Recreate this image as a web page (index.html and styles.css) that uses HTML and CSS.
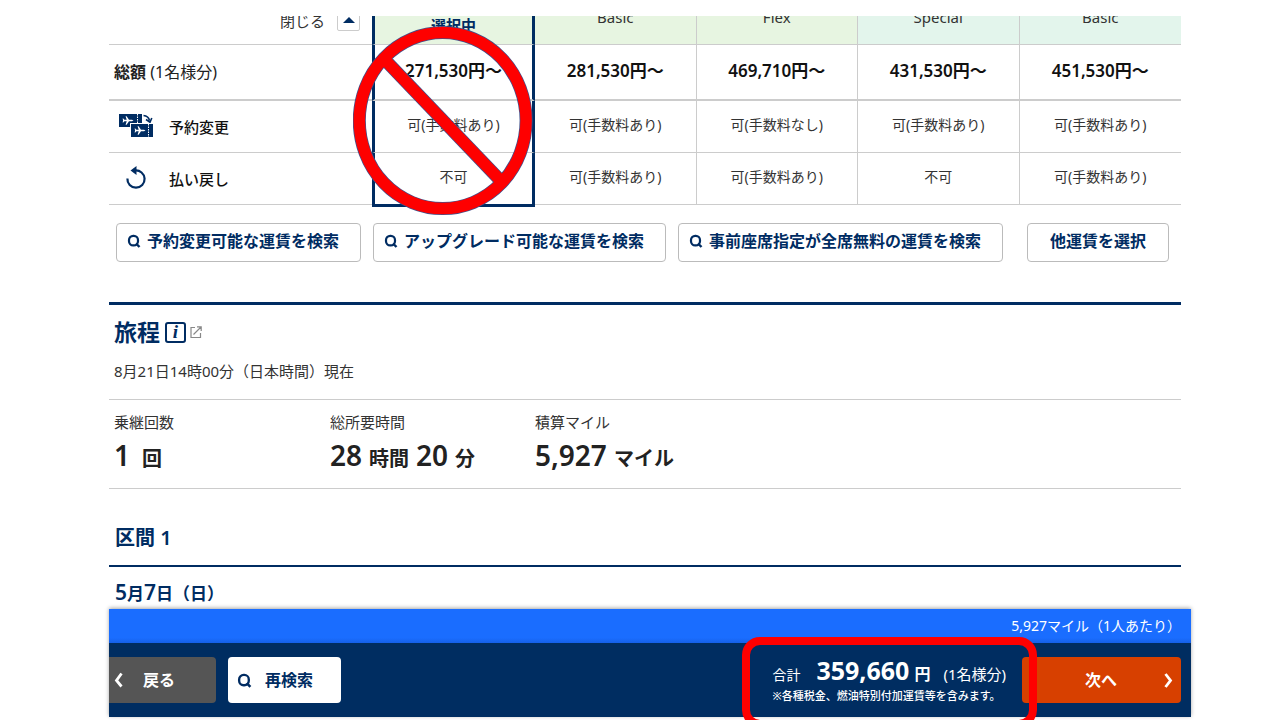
FILE: index.html
```html
<!DOCTYPE html>
<html lang="ja">
<head>
<meta charset="utf-8">
<title>旅程</title>
<link rel="stylesheet" href="styles.css">
</head>
<body>
<svg class="defs" width="0" height="0" aria-hidden="true">
  <symbol id="search" viewBox="0 0 14 14">
    <rect x="2" y="1.800" width="9" height="9.600" rx="4.200" fill="none" stroke="currentColor" stroke-width="2.200"/>
    <path d="M9 9.500l3.500 3.500" stroke="currentColor" stroke-width="2.400"/>
  </symbol>
  <symbol id="plane" viewBox="0 0 12 10">
    <path d="M11.500 5L10 4.200H7L4.600 .8H3.600L4.700 4.200H2.400L1.300 3H.6L1.100 5L.6 7h.7l1.100-1.200h2.300L3.600 9.200h1L7 5.800h3z" fill="#fff"/>
  </symbol>
</svg>
<div class="page">
  <main class="content">
    <table class="fares">
      <colgroup><col class="col-label"><col class="col-selected"><col><col><col><col></colgroup>
      <thead>
        <tr>
          <th>
            <div class="clip clip-toggle">
              <label for="toggle">閉じる</label>
              <button id="toggle" class="toggle" type="button" aria-label="閉じる"><svg width="12" height="6" viewBox="0 0 12 6"><path d="M6 0l6 6H0z" fill="#002c62"/></svg></button>
            </div>
          </th>
          <th class="selected eco">
            <div class="clip clip-selected">選択中</div>
            <svg class="prohibit" width="180" height="190" viewBox="353 26 180 190" aria-hidden="true">
              <g fill="none" stroke="#41508a" stroke-width="13">
                <ellipse cx="442.700" cy="120.600" rx="83.400" ry="88"/><path d="M388 63L498 178"/>
              </g>
              <g fill="none" stroke="#fe0000" stroke-width="11.500">
                <ellipse cx="442.700" cy="120.600" rx="83.400" ry="88"/><path d="M386 61L500 180"/>
              </g>
            </svg>
          </th>
          <th class="eco"><div class="clip">Basic</div></th>
          <th class="eco"><div class="clip">Flex</div></th>
          <th class="premium"><div class="clip">Special</div></th>
          <th class="premium"><div class="clip">Basic</div></th>
        </tr>
      </thead>
      <tbody>
        <tr class="row-total">
          <th><strong>総額</strong> (1名様分)</th>
          <td class="selected">271,530円～</td><td>281,530円～</td><td>469,710円～</td><td>431,530円～</td><td>451,530円～</td>
        </tr>
        <tr class="row-rule">
          <th><div class="rule">
            <svg width="44" height="26" viewBox="0 0 44 26" aria-hidden="true">
              <rect x="5" y="0" width="23" height="13" fill="#002c62"/>
              <use href="#plane" x="8" y="1.500" width="12" height="10"/>
              <path d="M23.500 0v13" stroke="#fff" stroke-dasharray="1.500 1"/>
              <path d="M29.500 1.500q5 .5 6 5M32 5.500l4 2.700 1.800-4.200" fill="none" stroke="#002c62" stroke-width="1.600"/>
              <rect x="16" y="9" width="24" height="15" fill="#fff"/>
              <rect x="17" y="10" width="22" height="13" fill="#002c62"/>
              <use href="#plane" x="20" y="11.500" width="12" height="10"/>
              <path d="M34.500 10v13" stroke="#fff" stroke-dasharray="1.500 1"/>
            </svg>予約変更</div></th>
          <td class="selected">可(手数料あり)</td><td>可(手数料あり)</td><td>可(手数料なし)</td><td>可(手数料あり)</td><td>可(手数料あり)</td>
        </tr>
        <tr class="row-rule">
          <th><div class="rule">
            <svg width="44" height="26" viewBox="0 0 44 26" aria-hidden="true">
              <path d="M21 4.500a8.600 8.600 0 1 1-7.600 8" fill="none" stroke="#002c62" stroke-width="2.200"/>
              <path d="M22.500 0v9L16.500 4.500z" fill="#002c62"/>
            </svg>払い戻し</div></th>
          <td class="selected selected-last">不可</td><td>可(手数料あり)</td><td>可(手数料あり)</td><td>不可</td><td>可(手数料あり)</td>
        </tr>
      </tbody>
    </table>

    <div class="searches">
      <button type="button" class="outline"><svg width="14" height="14"><use href="#search"/></svg>予約変更可能な運賃を検索</button>
      <button type="button" class="outline"><svg width="14" height="14"><use href="#search"/></svg>アップグレード可能な運賃を検索</button>
      <button type="button" class="outline"><svg width="14" height="14"><use href="#search"/></svg>事前座席指定が全席無料の運賃を検索</button>
      <button type="button" class="outline other">他運賃を選択</button>
    </div>

    <section class="itinerary">
      <h2>旅程
        <a href="#" class="info" aria-label="旅程について"><span class="info-box">i</span><svg width="12" height="12" viewBox="0 0 12 12" fill="none" stroke="#888" stroke-width="1.200"><path d="M5 1.500H1v10h9.500V7M3.500 8.500L11 1M7 .8h4.200V5"/></svg></a>
      </h2>
      <p class="asof">8月21日14時00分（日本時間）現在</p>
      <dl class="summary">
        <div><dt>乗継回数</dt><dd class="stops"><b>1</b>回</dd></div>
        <div><dt>総所要時間</dt><dd><b>28</b>時間<b>20</b>分</dd></div>
        <div><dt>積算マイル</dt><dd><b>5,927</b>マイル</dd></div>
      </dl>
      <h3>区間 1</h3>
      <p class="date"><b>5</b>月<b>7</b>日（日）</p>
    </section>
  </main>

  <footer class="bar">
    <div class="miles">5,927マイル（1人あたり）</div>
    <div class="actions">
      <button type="button" class="back"><svg width="9" height="16" viewBox="0 0 9 16"><path d="M7.500 1.500L2.500 8.500l5 6" fill="none" stroke="#fff" stroke-width="2.800"/></svg>戻る</button>
      <button type="button" class="again"><svg width="15" height="15"><use href="#search"/></svg>再検索</button>
      <div class="total">
        <p class="sum"><span class="sum-label">合計</span><b>359,660</b><strong>円</strong><span>(1名様分)</span></p>
        <p class="note">※各種税金、燃油特別付加運賃等を含みます。</p>
        <span class="frame"></span>
      </div>
      <button type="button" class="next"><span>次へ</span><svg width="9" height="16" viewBox="0 0 9 16"><path d="M1.500 2l5 6.500-5 6.500" fill="none" stroke="#fff" stroke-width="2.800"/></svg></button>
    </div>
  </footer>
</div>
</body>
</html>
```
FILE: styles.css
```css
* { box-sizing: border-box; margin: 0; padding: 0; }
body {
  font-family: "Noto Sans", "Noto Sans CJK JP", sans-serif;
  font-size: 15px;
  line-height: 20px;
  color: #333;
  background: #fff;
  overflow: hidden;
}
button { font: inherit; cursor: pointer; }
.defs { position: absolute; }
.page {
  display: flex;
  flex-direction: column;
  height: 100vh;
  padding: 16px 89px 3px 109px;
}
.content { flex: 1; min-height: 0; padding-right: 10px; }

.fares {
  width: 100%;
  table-layout: fixed;
  border-collapse: separate;
  border-spacing: 0;
}
.col-label { width: 263px; }
.col-selected { width: 163px; }
.fares th { font-weight: 400; }
.fares th, .fares td { border-bottom: 1px solid #ccc; text-align: center; }
.fares td:not(:last-child), .fares th.eco, .fares th.premium:not(:last-child) { border-right: 1px solid #ccc; }
.fares tbody th { text-align: left; padding-left: 5px; color: #222; }
.fares .selected.selected {
  position: relative;
  border-left: 3px solid #002c62;
  border-right: 3px solid #002c62;
}
.fares .selected-last::after {
  content: "";
  position: absolute;
  left: -3px;
  right: -3px;
  bottom: -3px;
  height: 3px;
  background: #002c62;
}
.eco { background: #e7f5e1; }
.premium { background: #e3f5ec; }
.clip {
  display: flex;
  align-items: flex-end;
  justify-content: center;
  height: 28px;
  padding-bottom: 17px;
  overflow: hidden;
}
.clip-selected { padding-bottom: 9px; font-weight: 600; color: #002c62; }
.clip-toggle {
  justify-content: flex-end;
  align-items: flex-end;
  gap: 12px;
  padding: 0 12px 13px 0;
}
.toggle {
  flex: none;
  display: flex;
  align-items: center;
  justify-content: center;
  width: 23px;
  height: 23px;
  border: 1px solid #ccc;
  border-radius: 2px;
  background: #fff;
}
.prohibit { position: absolute; left: -22px; top: 10px; z-index: 2; }
.row-total th, .row-total td { height: 56px; border-bottom-width: 2px; }
.row-total th { font-size: 16px; }
.row-total td { font-size: 17px; font-weight: 600; color: #111; padding-bottom: 2px; }
.row-rule th, .row-rule td { height: 52px; }
.row-rule td { font-size: 14px; padding-bottom: 3px; }
.rule { display: flex; align-items: center; gap: 11px; font-weight: 500; color: #111; }

.searches { display: flex; gap: 12px; padding: 18px 12px 40px 7px; }
.outline {
  display: flex;
  align-items: center;
  gap: 6px;
  height: 39px;
  padding: 0 21px 3px 10px;
  border: 1px solid #bbb;
  border-radius: 4px;
  background: #fff;
  color: #002c62;
  font-size: 16px;
  font-weight: 700;
  white-space: nowrap;
}
.other { margin-left: auto; padding: 0 22px 3px; }

.itinerary { border-top: 3px solid #002c62; }
.itinerary h2 {
  display: flex;
  align-items: center;
  gap: 5px;
  padding: 11px 5px 13px;
  font-size: 23px;
  line-height: 32px;
  color: #002c62;
}
.info { display: flex; align-items: center; gap: 4px; text-decoration: none; }
.info-box {
  width: 21px;
  height: 21px;
  border: 2px solid #002c62;
  border-radius: 3px;
  font: italic bold 19px/16px "Liberation Serif", serif;
  text-align: center;
  color: #002c62;
}
.asof { padding: 0 5px 18px; border-bottom: 1px solid #ccc; }
.summary { display: flex; padding: 12px 5px; height: 89px; border-bottom: 1px solid #ccc; }
.summary div:nth-child(1) { width: 216px; }
.summary div:nth-child(2) { width: 205px; }
.summary dd { font-size: 20px; line-height: 46px; font-weight: 700; color: #222; }
.summary b { margin-right: 7px; font-size: 28px; font-weight: 600; }
.summary b + b { margin-left: 7px; }
.summary .stops b { margin-right: 12px; }
.itinerary h3 {
  padding: 35px 6px 13px;
  border-bottom: 2px solid #002c62;
  font-size: 20px;
  line-height: 28px;
  font-weight: 600;
  color: #002c62;
}
.date { padding: 11px 6px; font-size: 17px; line-height: 28px; font-weight: 600; color: #002c62; }
.date b { font-size: 21px; font-weight: 600; }

.bar { position: relative; color: #fff; box-shadow: 0 -1px 4px rgba(0, 0, 0, 0.35); }
.miles {
  height: 34px;
  padding-right: 10px;
  background: linear-gradient(#1a6dff 85%, #1560e8);
  font-size: 14px;
  line-height: 33px;
  text-align: right;
}
.actions {
  display: flex;
  align-items: flex-start;
  height: 74px;
  padding: 14px 10px 0 0;
  background: #002d61;
}
.actions button {
  display: flex;
  align-items: center;
  height: 46px;
  border: 0;
  border-radius: 4px;
  font-size: 16px;
  font-weight: 700;
  color: #fff;
}
.actions .back { width: 107px; padding-left: 5px; gap: 20px; border-radius: 0 4px 4px 0; background: #555; }
.actions .again { width: 113px; margin-left: 12px; padding-left: 9px; gap: 13px; background: #fff; color: #002c62; }
.actions .next { width: 159px; padding: 0 8px; background: #d74000; }
.next span { flex: 1; padding-left: 8px; text-align: center; }
.total { position: relative; margin-left: auto; padding: 0 16px 0 10px; }
.sum { display: flex; align-items: baseline; line-height: 26px; }
.sum b { margin: 0 5px 0 16px; font-size: 25px; }
.sum strong { margin-right: 13px; font-size: 16px; }
.sum-label { font-size: 14px; }
.note { font-size: 11px; line-height: 16px; font-weight: 500; }
.frame {
  position: absolute;
  inset: -20px -15px -24px -20px;
  z-index: 2;
  border: 8px solid #fe0000;
  border-radius: 18px;
  pointer-events: none;
}
```
